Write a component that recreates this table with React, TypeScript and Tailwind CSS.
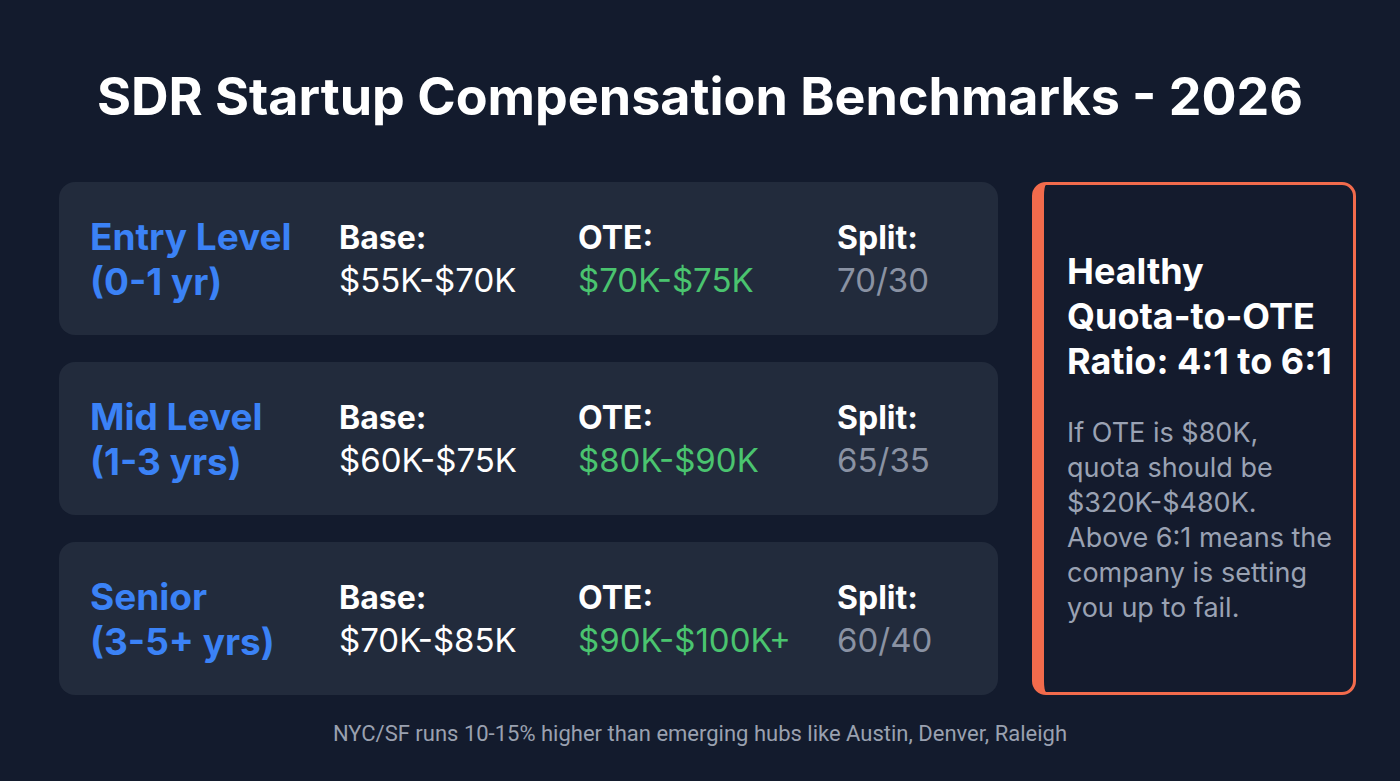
const tiers = [
  { label: 'Entry Level', sub: '(0-1 yr)', base: '$55K-$70K', ote: '$70K-$75K', split: '70/30' },
  { label: 'Mid Level', sub: '(1-3 yrs)', base: '$60K-$75K', ote: '$80K-$90K', split: '65/35' },
  { label: 'Senior', sub: '(3-5+ yrs)', base: '$70K-$85K', ote: '$90K-$100K+', split: '60/40' },
];

function Stat({ title, value, tone }: { title: string; value: string; tone: string }) {
  return (
    <div className="flex flex-col">
      <span className="text-[32px] font-bold leading-[43px] text-white">{title}</span>
      <span className={`text-[33px] leading-[43px] ${tone}`}>{value}</span>
    </div>
  );
}

export default function App() {
  return (
    <div
      className="flex h-[781px] w-[1400px] flex-col bg-[#131b2d] text-white"
      style={{ fontFamily: 'Inter, "Noto Sans", sans-serif' }}
    >
      <h1 className="pt-[67px] text-center text-[52px] font-bold leading-[60px]">
        SDR Startup Compensation Benchmarks - 2026
      </h1>

      <div className="mt-[55px] flex gap-[34px] pl-[59px] pr-[44px]">
        <div className="flex w-[939px] flex-col gap-[27px]">
          {tiers.map((t) => (
            <div
              key={t.label}
              className="grid h-[153px] grid-cols-[249px_239px_259px_1fr] items-center rounded-2xl bg-[#222b3c] pl-[31px]"
            >
              <div className="flex flex-col text-[37px] font-bold leading-[45px] text-[#3b82f6]">
                <span>{t.label}</span>
                <span>{t.sub}</span>
              </div>
              <Stat title="Base:" value={t.base} tone="text-white" />
              <Stat title="OTE:" value={t.ote} tone="text-[#4ac46f]" />
              <Stat title="Split:" value={t.split} tone="text-[#8a92a3]" />
            </div>
          ))}
        </div>

        <div className="flex h-[513px] w-[324px] flex-col rounded-[14px] border-[3px] border-l-[12px] border-[#f26b4c] bg-[#141b2d] pl-[23px] pr-1 pt-[64px]">
          <h2 className="text-[36px] font-bold leading-[45px] text-white">
            Healthy
            <br />
            Quota-to-OTE
            <br />
            Ratio: 4:1 to 6:1
          </h2>
          <p className="mt-[31px] text-[27px] leading-[35px] text-[#9aa2b3]">
            If OTE is $80K,
            <br />
            quota should be
            <br />
            $320K-$480K.
            <br />
            Above 6:1 means the
            <br />
            company is setting
            <br />
            you up to fail.
          </p>
        </div>
      </div>

      <p className="mt-[22px] text-center text-[22px] text-[#9aa1b0]" style={{ fontFamily: 'Roboto, Inter, sans-serif' }}>
        NYC/SF runs 10-15% higher than emerging hubs like Austin, Denver, Raleigh
      </p>
    </div>
  );
}
